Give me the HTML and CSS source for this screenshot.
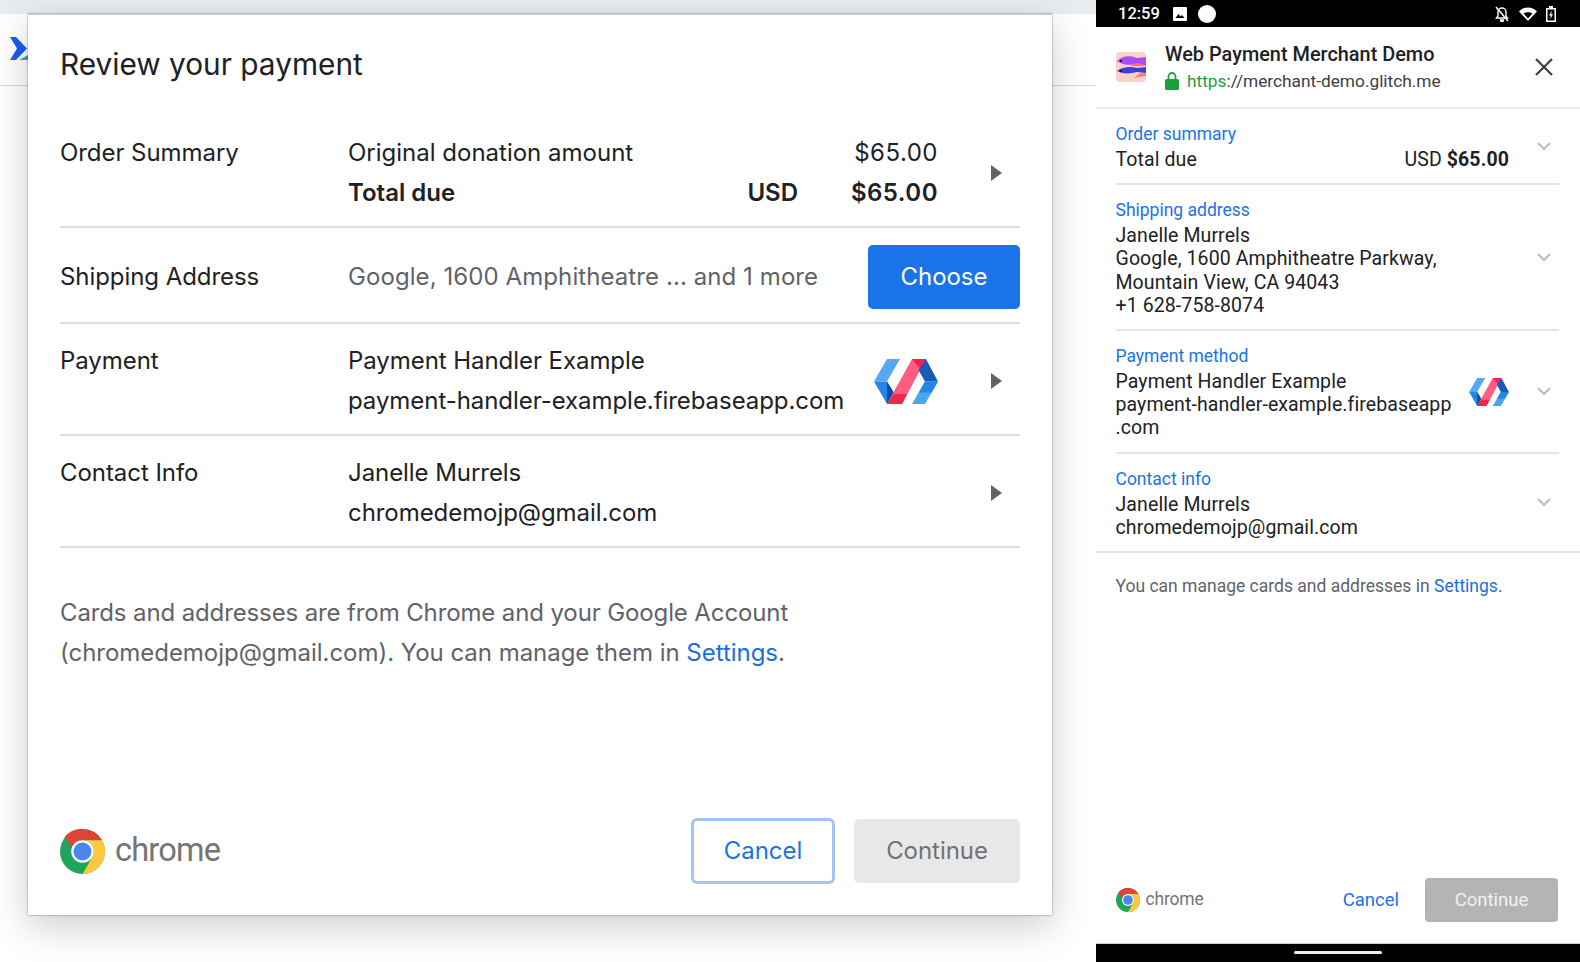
FILE: index.html
```html
<!DOCTYPE html>
<html lang="en">
<head>
<meta charset="utf-8">
<title>Review your payment</title>
<link rel="stylesheet" href="styles.css">
</head>
<body>
<svg class="defs" width="0" height="0" aria-hidden="true">
  <defs>
    <symbol id="chrome-logo" viewBox="0 0 48 48">
      <circle cx="24" cy="24" r="24" fill="#1fa55a"/>
      <path d="M24 0a24 24 0 0 1 20.8 12H24a12 12 0 0 0-11.3 8L5 8.4A24 24 0 0 1 24 0z" fill="#db4437"/>
      <path d="M44.8 12A24 24 0 0 1 24 48L34.4 30A12 12 0 0 0 24 12z" fill="#fdc73f"/>
      <circle cx="24" cy="24" r="12" fill="#fff"/>
      <circle cx="24" cy="24" r="9.6" fill="#4a86f0"/>
    </symbol>
    <symbol id="polymer-logo" viewBox="0 0 64 45">
      <path d="M0 22.500 13 0h13L13 22.500z" fill="#56a8f0"/>
      <path d="M0 22.500h13l7 11.500-7 11z" fill="#2387e3"/>
      <path d="M13 22.500l7 11.500-7 11z" fill="#0f4ba5"/>
      <path d="M13 45 38 0h14L28 45z" fill="#ff5c82"/>
      <path d="M38 0h14l-5.500 10z" fill="#f5224f"/>
      <path d="M13 45h15l5-10H20z" fill="#f0264f"/>
      <path d="M52 0l12 22.500H51L44.500 11z" fill="#1c5bb5"/>
      <path d="M64 22.500H51L38 45h13z" fill="#4da4ef"/>
      <path d="M51 22.500h13l-6.500 11H45z" fill="#2387e3"/>
    </symbol>
  </defs>
</svg>

<div class="desktop">
  <div class="strip"></div>
  <div class="pagebar">
    <svg class="page-mark" viewBox="0 0 20 24" width="20" height="24"><path d="M0 0h6l11 11.500L6 23H0l7-11.500z" fill="#1a5cf5"/><path d="M9 23l9-5v5z" fill="#1fb6c9"/></svg>
  </div>

  <section class="dialog">
    <h1 class="dlg-title">Review your payment</h1>

    <div class="dlg-row dlg-row-summary">
      <div class="dlg-label">Order Summary</div>
      <div class="dlg-summary">
        <span>Original donation amount</span><span></span><span class="amount">$65.00</span>
        <strong>Total due</strong><strong class="currency">USD</strong><strong class="amount">$65.00</strong>
      </div>
      <svg class="caret" viewBox="0 0 11 16" width="11" height="16"><path d="M0 0l11 8-11 8z"/></svg>
    </div>

    <div class="dlg-row dlg-row-ship">
      <div class="dlg-label">Shipping Address</div>
      <div class="dlg-value muted">Google, 1600 Amphitheatre ... and 1 more</div>
      <button class="btn btn-choose">Choose</button>
    </div>

    <div class="dlg-row">
      <div class="dlg-label">Payment</div>
      <div class="dlg-value">
        <div>Payment Handler Example</div>
        <div>payment-handler-example.firebaseapp.com</div>
      </div>
      <svg class="dlg-polymer"><use href="#polymer-logo"/></svg>
      <svg class="caret caret-after-logo" viewBox="0 0 11 16" width="11" height="16"><path d="M0 0l11 8-11 8z"/></svg>
    </div>

    <div class="dlg-row">
      <div class="dlg-label">Contact Info</div>
      <div class="dlg-value">
        <div>Janelle Murrels</div>
        <div>chromedemojp@gmail.com</div>
      </div>
      <svg class="caret" viewBox="0 0 11 16" width="11" height="16"><path d="M0 0l11 8-11 8z"/></svg>
    </div>

    <p class="dlg-note">Cards and addresses are from Chrome and your Google Account<br><span class="dlg-note-second">(chromedemojp@gmail.com). You can manage them in <a class="link">Settings</a>.</span></p>

    <footer class="dlg-footer">
      <svg class="dlg-chrome"><use href="#chrome-logo"/></svg>
      <span class="dlg-wordmark">chrome</span>
      <button class="btn btn-cancel">Cancel</button>
      <button class="btn btn-continue">Continue</button>
    </footer>
  </section>
</div>

<div class="phone">
  <div class="status">
    <span class="clock">12:59</span>
    <svg class="st-img" viewBox="0 0 14 14" width="14" height="14"><path d="M1 0h12a1 1 0 0 1 1 1v12a1 1 0 0 1-1 1H1a1 1 0 0 1-1-1V1a1 1 0 0 1 1-1z" fill="#fff"/><path d="M2.500 11l3-4 2 2.500 1.500-1.500 2.500 3z" fill="#000"/></svg>
    <span class="st-dot"></span>
    <span class="st-spacer"></span>
    <svg class="st-bell" viewBox="0 0 16 16" width="16" height="16"><path d="M8 2a4 4 0 0 1 4 4v4l1.500 2h-11L4 10V6a4 4 0 0 1 4-4zM6.500 14h3a1.500 1.500 0 0 1-3 0z" fill="none" stroke="#fff" stroke-width="1.400"/><path d="M2 1l12 14" stroke="#fff" stroke-width="1.500"/></svg>
    <svg class="st-wifi" viewBox="0 0 18 14" width="18" height="14"><path d="M0 4.500C5 -1 13 -1 18 4.500L9 14z" fill="#fff"/><path d="M4.500 6.500c2.500-1.800 6.500-1.800 9 0L9 11.500z" fill="#000"/></svg>
    <svg class="st-batt" viewBox="0 0 10 16" width="10" height="16"><path d="M3 0h4v2h3v14H0V2h3z" fill="#fff"/><path d="M1.500 3.500h7v11h-7z" fill="#000"/><path d="M5.800 4.500L3 9.500h1.800l-.6 4L7 8.200H5.200z" fill="#fff"/></svg>
  </div>

  <header class="ph-head">
    <svg class="fish" viewBox="0 0 30 30" width="30" height="30">
      <rect width="30" height="30" rx="4" fill="#fdd0ca"/>
      <path d="M30 8v6H14l6-4z" fill="#ff6f6f"/>
      <path d="M1 9c5-5 13-6 20-3l9-1v8l-9-2c-7 3-15 2-20-2z" fill="#a64dff"/>
      <path d="M30 21v3l-12 2 6-5z" fill="#ff8080"/>
      <path d="M1 19c5-4 13-5 20-3l9-1v6l-9-1c-7 2-15 2-20-1z" fill="#3d3de0"/>
      <circle cx="5" cy="9" r="1.200" fill="#222"/><circle cx="5" cy="19" r="1.200" fill="#222"/>
    </svg>
    <div class="ph-merchant">
      <div class="ph-name">Web Payment Merchant Demo</div>
      <div class="ph-url">
        <svg class="lock" viewBox="0 0 14 18" width="14" height="18"><path d="M1.500 7h11A1.500 1.500 0 0 1 14 8.500v8a1.500 1.500 0 0 1-1.500 1.500h-11A1.500 1.500 0 0 1 0 16.500v-8A1.500 1.500 0 0 1 1.500 7z" fill="#1e9e3e"/><path d="M3.500 8V4.500a3.500 3.500 0 0 1 7 0V8" fill="none" stroke="#1e9e3e" stroke-width="1.800"/></svg>
        <span><span class="https">https</span>://merchant-demo.glitch.me</span>
      </div>
    </div>
    <svg class="close" viewBox="0 0 18 18" width="18" height="18"><path d="M1 1l16 16M17 1L1 17" stroke="#3c4043" stroke-width="2.200" fill="none"/></svg>
  </header>

  <div class="ph-list">
    <div class="ph-sec ph-sec-order">
      <div class="ph-body">
        <div class="ph-heading">Order summary</div>
        <div class="ph-total"><span>Total due</span><span>USD <strong>$65.00</strong></span></div>
      </div>
      <svg class="chev" viewBox="0 0 14 9" width="14" height="9"><path d="M1 1l6 6 6-6" fill="none" stroke="#bdbdbd" stroke-width="2"/></svg>
    </div>
    <div class="ph-sec">
      <div class="ph-body">
        <div class="ph-heading">Shipping address</div>
        <div>Janelle Murrels</div>
        <div>Google, 1600 Amphitheatre Parkway,</div>
        <div>Mountain View, CA 94043</div>
        <div>+1 628-758-8074</div>
      </div>
      <svg class="chev" viewBox="0 0 14 9" width="14" height="9"><path d="M1 1l6 6 6-6" fill="none" stroke="#bdbdbd" stroke-width="2"/></svg>
    </div>
    <div class="ph-sec">
      <div class="ph-body">
        <div class="ph-heading">Payment method</div>
        <div>Payment Handler Example</div>
        <div>payment-handler-example.firebaseapp</div>
        <div>.com</div>
      </div>
      <svg class="ph-polymer"><use href="#polymer-logo"/></svg>
      <svg class="chev" viewBox="0 0 14 9" width="14" height="9"><path d="M1 1l6 6 6-6" fill="none" stroke="#bdbdbd" stroke-width="2"/></svg>
    </div>
    <div class="ph-sec ph-sec-last">
      <div class="ph-body">
        <div class="ph-heading">Contact info</div>
        <div>Janelle Murrels</div>
        <div>chromedemojp@gmail.com</div>
      </div>
      <svg class="chev" viewBox="0 0 14 9" width="14" height="9"><path d="M1 1l6 6 6-6" fill="none" stroke="#bdbdbd" stroke-width="2"/></svg>
    </div>
  </div>

  <p class="ph-note">You can manage cards and addresses in <a class="link">Settings</a>.</p>

  <footer class="ph-footer">
    <svg class="ph-chrome"><use href="#chrome-logo"/></svg>
    <span class="ph-wordmark">chrome</span>
    <button class="ph-cancel">Cancel</button>
    <button class="ph-continue">Continue</button>
  </footer>

  <div class="navbar"><span class="pill"></span></div>
</div>
</body>
</html>
```
FILE: styles.css
```css
* { box-sizing: border-box; }
html, body { margin: 0; height: 962px; overflow: hidden; background: #fff; }
body {
  display: flex;
  font-family: Roboto, "Liberation Sans", sans-serif;
  color: #202124;
}
.defs { position: absolute; }
button { font-family: inherit; cursor: pointer; }
.link { color: #1a6fdc; }

/* left: desktop dialog */
.desktop { position: relative; width: 1096px; height: 962px; background: #fff; overflow: hidden; flex: none; }
.strip { height: 14px; background: #e9ecee; }
.pagebar { height: 72px; border-bottom: 1px solid #d5d7da; padding: 23px 0 0 10px; }
.page-mark { display: block; }

.dialog {
  position: absolute;
  left: 28px; top: 14px;
  width: 1024px; height: 901px;
  background: #fff;
  border-top: 1px solid #c9cbcd;
  box-shadow: 0 0 2px rgba(0,0,0,.45), 0 12px 36px rgba(0,0,0,.2);
  padding: 0 32px;
  display: flex;
  flex-direction: column;
  font-family: Inter, Roboto, sans-serif;
  font-size: 24px;
  line-height: 40px;
}
.dlg-title { margin: 29px 0 40px; font-size: 29.800px; font-weight: 400; line-height: 40px; height: 49px; }
.dlg-row {
  display: flex;
  align-items: center;
  padding: 17px 0 13px;
  border-bottom: 2px solid #dcdce1;
}
.dlg-row-summary { padding: 0 0 13px; }
.dlg-row-ship { padding: 17px 0 13px; }
.dlg-label { width: 288px; flex: none; align-self: flex-start; letter-spacing: -.06px; }
.dlg-row-ship .dlg-label { align-self: center; }
.dlg-value { flex: 1; white-space: nowrap; letter-spacing: -.06px; }
.dlg-value.muted { letter-spacing: .08px; }
.dlg-summary {
  flex: 1;
  display: grid;
  grid-template-columns: 1fr auto 140px;
  padding-right: 1px;
}
.dlg-summary strong { font-weight: 600; }
.amount { text-align: right; letter-spacing: .5px; }
.caret { flex: none; fill: #5f6368; margin: 0 18px 0 52px; }
.caret-after-logo { margin-left: 53px; }
.muted { color: #5f6368; }
.dlg-polymer { width: 64px; height: 45px; flex: none; }
.btn { border-radius: 5px; border: 0; padding: 0 0 2px; font-family: Inter, Roboto, sans-serif; font-size: 24px; letter-spacing: -.05px; }
.btn-choose { width: 152px; height: 64px; background: #1a73e8; color: #fff; flex: none; }
.dlg-note { margin: 45px 0 0; color: #5f6368; letter-spacing: -.12px; }
.dlg-note-second { letter-spacing: -.03px; }
.dlg-footer { margin-top: auto; padding-bottom: 31px; display: flex; align-items: center; }
.dlg-chrome { width: 45px; height: 45px; flex: none; }
.dlg-wordmark { font-family: Roboto, sans-serif; font-size: 32.500px; letter-spacing: -.8px; color: #757575; margin: 0 0 3px 10px; }
.btn-cancel {
  margin-left: auto;
  width: 144px; height: 66px;
  background: #fff;
  color: #1a73e8;
  border: 3px solid #a3c4f5;
  border-radius: 6px;
}
.btn-continue { margin-left: 19px; width: 166px; height: 64px; background: #e8e8e8; color: #6f7377; }

/* right: phone */
.phone { width: 484px; height: 962px; flex: none; display: flex; flex-direction: column; font-size: 19.500px; line-height: 23.200px; letter-spacing: .1px; background: #fff; }
.status { height: 27px; background: #000; display: flex; align-items: center; padding: 0 24px 0 22px; color: #fff; flex: none; letter-spacing: 0; }
.clock { font-size: 16.500px; font-weight: 500; line-height: 27px; }
.st-img { margin-left: 13px; }
.st-dot { width: 18px; height: 18px; border-radius: 50%; background: #fff; margin-left: 11px; }
.st-spacer { flex: 1; }
.st-wifi { margin-left: 9px; }
.st-batt { margin-left: 9px; }

.ph-head { height: 82px; flex: none; border-bottom: 2px solid #ececec; display: flex; align-items: center; padding: 0 20px 0 20px; letter-spacing: 0; }
.fish { flex: none; margin-right: 19px; }
.ph-merchant { flex: 1; }
.ph-name { font-weight: 500; font-size: 19.900px; line-height: 27px; color: #202124; }
.ph-url { display: flex; align-items: center; gap: 8px; font-size: 17.300px; line-height: 25px; color: #3c4043; padding-top: 1px; }
.https { color: #1e9e3e; }
.close { flex: none; margin-right: 7px; }

.ph-list { border-bottom: 2px solid #e6e6e6; padding-left: 19.500px; padding-right: 21px; flex: none; }
.ph-sec { display: flex; align-items: center; padding: 13px 0 12px; border-bottom: 2px solid #e6e6e6; }
.ph-sec-last { border-bottom: 0; padding-bottom: 12px; }
.ph-sec-order .chev { align-self: flex-start; margin-top: 20px; }
.ph-body { flex: 1; color: #202124; white-space: nowrap; }
.ph-heading { color: #1a73e8; font-size: 17.500px; line-height: 25px; margin-bottom: 1px; letter-spacing: 0; }
.ph-total { display: flex; justify-content: space-between; padding-right: 28px; }
.ph-total strong { font-weight: 700; }
.chev { flex: none; margin-right: 8px; }
.ph-polymer { width: 40px; height: 28px; flex: none; margin-right: 28px; }
.ph-note { margin: 21px 0 0; padding: 0 19.500px; font-size: 17.500px; line-height: 24px; color: #5f6368; letter-spacing: 0; }

.ph-footer { margin-top: auto; height: 86px; padding: 0 22px 0 19.500px; display: flex; align-items: center; flex: none; }
.ph-chrome { width: 24px; height: 24px; flex: none; }
.ph-wordmark { font-size: 17.500px; letter-spacing: -.2px; color: #757575; margin-left: 6px; }
.ph-cancel { margin-left: auto; background: none; border: 0; font-size: 18.500px; color: #1a73e8; padding: 0; }
.ph-continue { margin-left: 26px; width: 133px; height: 44px; border: 0; border-radius: 4px; background: #b4b4b4; color: #f1f1f1; font-size: 18.500px; }

.navbar { height: 19px; background: #000; border-top: 1px solid #ccc; display: flex; justify-content: center; flex: none; }
.pill { width: 88px; height: 3px; background: #eee; border-radius: 2px; margin-top: 7px; }
```
